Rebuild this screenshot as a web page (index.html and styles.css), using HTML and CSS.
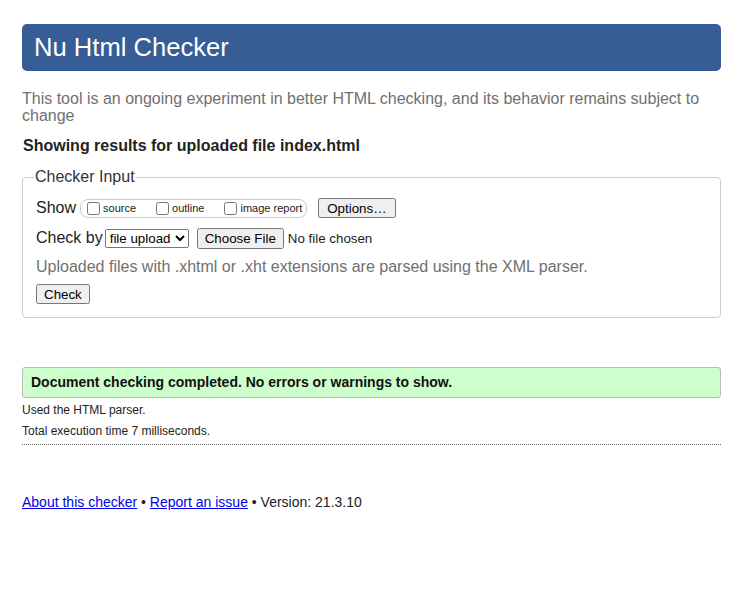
FILE: index.html
```html
<!DOCTYPE html>
<html>
<head>
<meta charset="utf-8">
<title>Nu Html Checker</title>
<link rel="stylesheet" href="styles.css">
</head>
<body>
<div class="page">
  <h1 class="title">Nu Html Checker</h1>
  <p class="intro">This tool is an ongoing experiment in better HTML checking, and its behavior remains subject to change</p>
  <p class="showing">Showing results for uploaded file index.html</p>
  <fieldset class="input">
    <legend class="legend">Checker Input</legend>
    <div class="row first">
      <span class="lbl">Show</span>
      <span class="opts">
        <label class="opt"><input type="checkbox" class="cb">source</label>
        <label class="opt"><input type="checkbox" class="cb">outline</label>
        <label class="opt last"><input type="checkbox" class="cb">image report</label>
      </span>
      <button class="btn options">Options…</button>
    </div>
    <div class="row">
      <span class="lbl lbl2">Check by</span>
      <select class="sel"><option>file upload</option></select>
      <input type="file" class="file">
    </div>
    <p class="note">Uploaded files with .xhtml or .xht extensions are parsed using the XML parser.</p>
    <div class="row"><button class="btn check">Check</button></div>
  </fieldset>
  <p class="success">Document checking completed. No errors or warnings to show.</p>
  <p class="details d1">Used the HTML parser.</p>
  <p class="details d2">Total execution time 7 milliseconds.</p>
  <hr class="sep">
  <p class="footer"><a href="#">About this checker</a> • <a href="#">Report an issue</a> • Version: 21.3.10</p>
</div>
</body>
</html>
```
FILE: styles.css
```css
html, body {
  margin: 0;
  padding: 0;
  background: #fff;
}
body {
  font-family: "Liberation Sans", Arial, sans-serif;
  color: #222;
}
.page {
  padding: 24px 16px 40px 22px;
}
.title {
  margin: 0;
  background: #365d95;
  color: #fff;
  font-weight: normal;
  font-size: 25.6px;
  line-height: 47px;
  height: 47px;
  padding: 0 12px;
  border-radius: 5px;
}
.intro {
  margin: 19px 0 0;
  color: #707070;
  font-size: 16px;
  line-height: 17px;
}
.showing {
  margin: 13px 0 0 1px;
  font-weight: bold;
  font-size: 16px;
  line-height: 18px;
}
.input {
  margin: 13px 0 0;
  border: 1px solid #ccc;
  border-radius: 4px;
  padding: 0 13px 11px;
}
.legend {
  font-size: 16px;
  padding: 0 1px;
  margin-left: -2px;
  color: #333;
}
.row {
  display: flex;
  align-items: center;
  font-size: 16px;
  margin-top: 4px;
  height: 26px;
}
.row.first {
  margin-top: 9px;
}
.lbl {
  margin-right: 4px;
}
.lbl2 {
  margin-right: 2px;
}
.opts {
  display: inline-flex;
  align-items: center;
  border: 1px solid #ccc;
  border-radius: 8px;
  height: 17px;
  padding: 0 4px 0 6px;
  margin-right: 11px;
}
.opt {
  display: inline-flex;
  align-items: center;
  font-size: 11px;
  margin-right: 20px;
}
.opt.last {
  margin-right: 0;
}
.cb {
  margin: 0 3px 0 0;
  width: 13px;
  height: 13px;
}
.btn {
  font-family: "Liberation Sans", Arial, sans-serif;
  font-size: 13.33px;
  height: 20px;
  padding: 0 7px;
}
.sel {
  font-family: "Liberation Sans", Arial, sans-serif;
  font-size: 13.33px;
  height: 19px;
  width: 84px;
  margin-right: 8px;
}
.file {
  font-family: "Liberation Sans", Arial, sans-serif;
  font-size: 13.33px;
}
.note {
  margin: 7px 0 0;
  color: #707070;
  font-size: 16px;
  line-height: 18px;
}
.check {
  margin-top: 2px;
  padding: 0 6px;
}
.success {
  margin: 49px 0 0;
  background: #ccffcc;
  border: 1px solid #bbb;
  border-radius: 3px;
  font-weight: bold;
  font-size: 14px;
  line-height: 29px;
  padding: 0 8px;
  color: #111;
}
.details {
  font-size: 12px;
  line-height: 16px;
  color: #222;
}
.d1 {
  margin: 4px 0 0;
}
.d2 {
  margin: 5px 0 0;
}
.sep {
  margin: 5px 0 0;
  border: 0;
  border-top: 1px dotted #666;
  height: 0;
}
.footer {
  margin: 48px 0 0;
  font-size: 14px;
  line-height: 18px;
  color: #222;
}
.footer a {
  color: #0000ee;
}
```
